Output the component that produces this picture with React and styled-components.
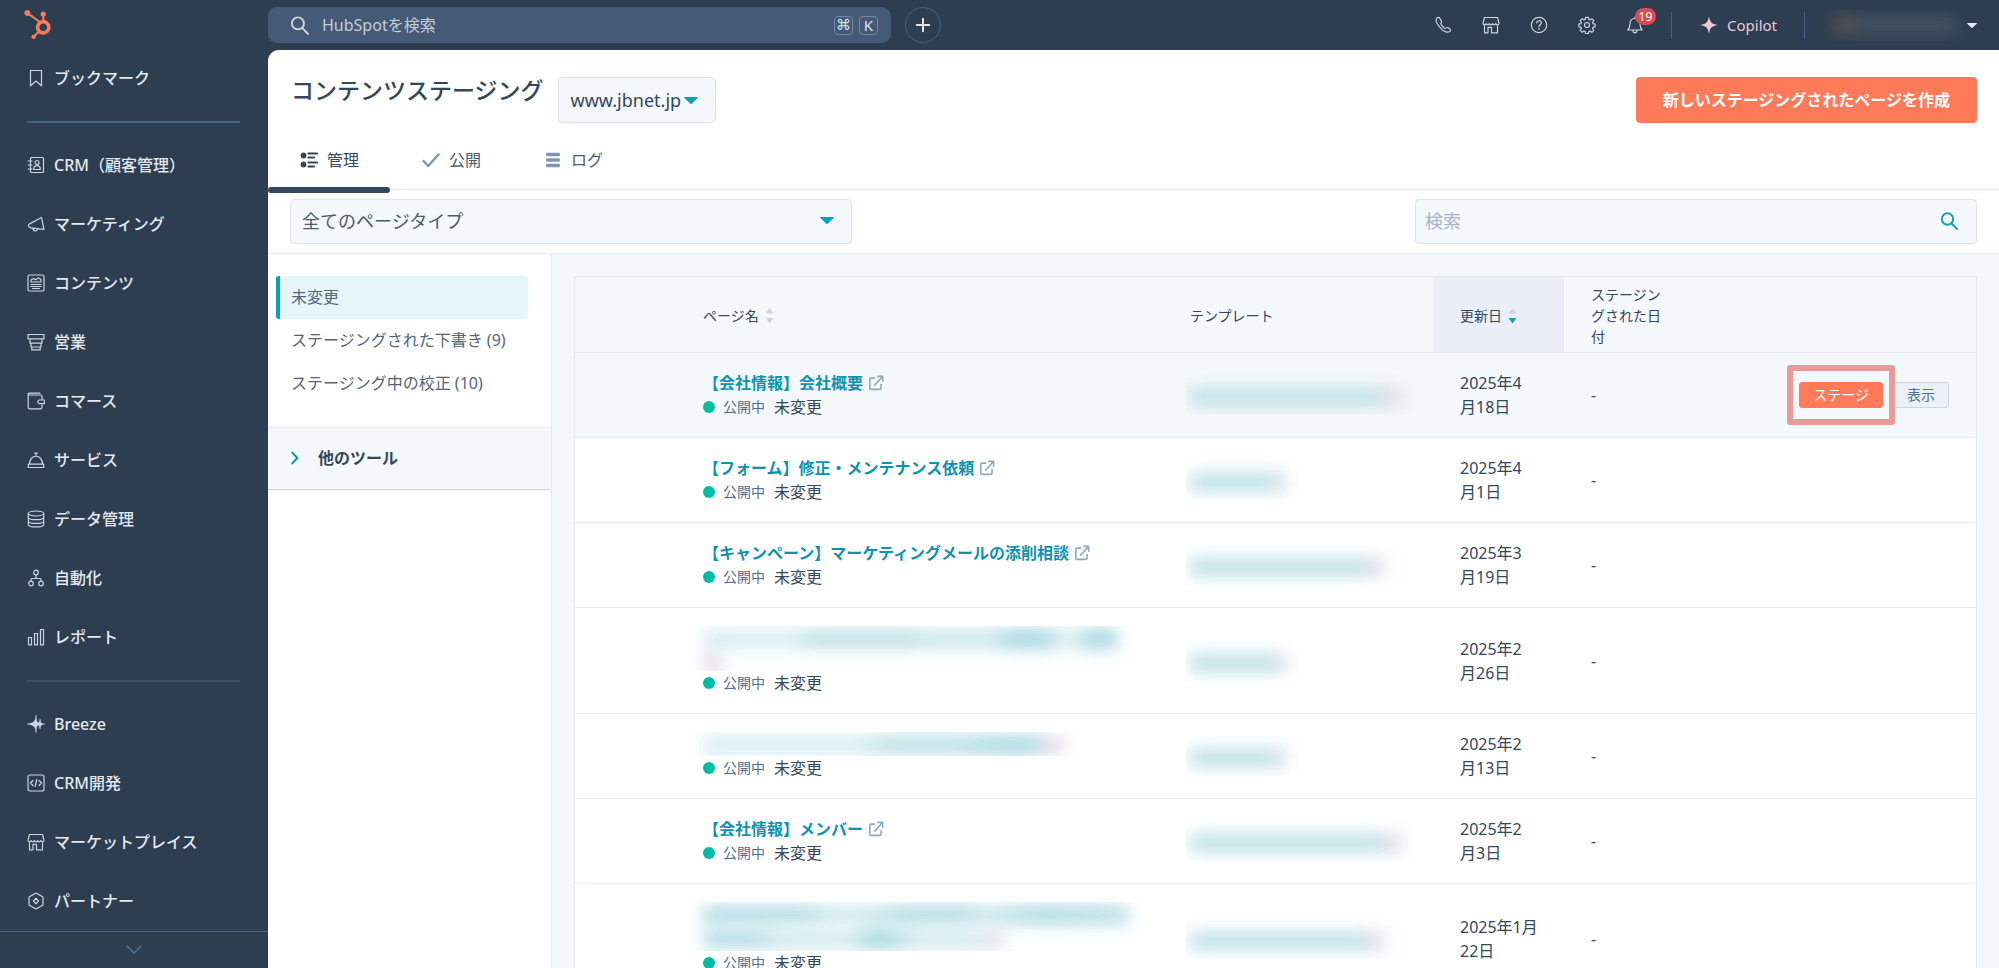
import { useState } from "react";
import styled, { createGlobalStyle } from "styled-components";
import { FaHubspot } from "react-icons/fa";

const GlobalStyle = createGlobalStyle`
  * { box-sizing: border-box; }
  body {
    margin: 0;
    background: #2d3e50;
    color: #33475b;
    font-family: "Noto Sans", "Noto Sans CJK JP", sans-serif;
    font-size: 16px;
    line-height: 24px;
  }
  button, input, select { font: inherit; color: inherit; }
  a { color: inherit; text-decoration: none; }
  svg { display: block; flex: none; }
`;

const Page = styled.div`
  display: flex;
  height: 100vh;
  overflow: hidden;
`;

/* ---------- sidebar ---------- */

const Sidebar = styled.aside`
  flex: none;
  width: 268px;
  display: flex;
  flex-direction: column;
  background: #2d3e50;
  color: #e4e9ef;
`;

const Logo = styled.a`
  flex: none;
  display: flex;
  align-items: center;
  height: 48px;
  padding-left: 23px;
  color: #ff7a59;
`;

const Nav = styled.nav`
  flex: 1;
  min-height: 0;
  overflow: hidden;
`;

const NavItem = styled.a`
  display: flex;
  align-items: center;
  gap: 9px;
  height: 59px;
  padding-left: 27px;
  font-weight: 500;
  svg { color: #cbd6e2; }
`;

const NavDivider = styled.hr`
  height: 2px;
  margin: 14px 28px 12px 27px;
  border: 0;
  background: ${(p) => (p.$soft ? "#3b5069" : "#456389")};
`;

const NavMore = styled.button`
  flex: none;
  display: flex;
  align-items: center;
  justify-content: center;
  height: 37px;
  border: 0;
  border-top: 1px solid #456080;
  background: #2d3e50;
  color: #4d6c92;
`;

/* ---------- top bar ---------- */

const Column = styled.div`
  flex: 1;
  min-width: 0;
  display: flex;
  flex-direction: column;
`;

const TopBar = styled.header`
  flex: none;
  display: flex;
  align-items: center;
  height: 50px;
  padding-right: 22px;
  color: #cbd6e2;
`;

const GlobalSearch = styled.label`
  display: flex;
  align-items: center;
  gap: 6px;
  flex: 0 1 623px;
  height: 36px;
  padding: 0 13px 0 22px;
  border-radius: 9px;
  background: #445a76;
  input {
    flex: 1;
    min-width: 0;
    padding: 0 0 0 7px;
    border: 0;
    outline: 0;
    background: none;
  }
  input::placeholder { color: #c3cedb; opacity: 1; }
`;

const Key = styled.kbd`
  display: flex;
  align-items: center;
  justify-content: center;
  width: 19px;
  height: 19px;
  border: 1px solid #7089a8;
  border-radius: 4px;
  color: #dbe3ec;
  font-family: ${(p) => (p.$symbol ? '"DejaVu Sans", sans-serif' : "inherit")};
  font-size: 15px;
  line-height: 17px;
`;

const AddButton = styled.button`
  display: flex;
  align-items: center;
  justify-content: center;
  width: 36px;
  height: 36px;
  margin-left: 14px;
  border: 1px solid #456080;
  border-radius: 50%;
  background: none;
  color: #e4e9ef;
`;

const Tools = styled.div`
  display: flex;
  align-items: center;
  gap: 30px;
  margin: 0 27px 0 auto;
`;

const ToolButton = styled.button`
  position: relative;
  padding: 0;
  border: 0;
  background: none;
`;

const Badge = styled.span`
  position: absolute;
  top: -8px;
  left: 9px;
  width: 21px;
  height: 17px;
  border-radius: 9px;
  background: #d94c53;
  color: #fff;
  font-size: 12px;
  line-height: 17px;
  text-align: center;
`;

const BarDivider = styled.span`
  width: 1px;
  height: 27px;
  background: #456080;
`;

const Copilot = styled.button`
  display: flex;
  align-items: center;
  gap: 9px;
  margin: 0 27px 0 28px;
  padding: 0;
  border: 0;
  background: none;
  color: #ecc9d8;
  font-size: 15px;
`;

const Account = styled.button`
  display: flex;
  align-items: center;
  margin-left: 17px;
  padding: 0;
  border: 0;
  background: none;
  color: #e4e9ef;
`;

const AccountName = styled.span`
  display: block;
  width: 145px;
  height: 31px;
  padding: 5px 10px;
  overflow: hidden;
  &::before {
    content: "";
    display: block;
    height: 21px;
    background: linear-gradient(90deg, #524e54 0 14%, #414f60 22%);
    filter: blur(7px);
  }
`;

/* ---------- content header ---------- */

const Content = styled.main`
  flex: 1;
  min-height: 0;
  display: flex;
  flex-direction: column;
  overflow: hidden;
  border-top-left-radius: 11px;
  background: #fff;
`;

const TitleRow = styled.div`
  display: flex;
  align-items: flex-start;
  gap: 14px;
  padding: 27px 22px 0 23px;
`;

const Title = styled.h1`
  margin: 0;
  font-size: 23px;
  font-weight: 500;
  line-height: 26px;
`;

const DomainButton = styled.button`
  display: flex;
  align-items: center;
  gap: 3px;
  width: 158px;
  height: 46px;
  padding: 0 12px;
  border: 1px solid #dbe3eb;
  border-radius: 4px;
  background: #f5f8fa;
  font-size: 18px;
`;

const PrimaryButton = styled.button`
  height: 46px;
  margin-left: auto;
  padding: 0 27px;
  border: 0;
  border-radius: 4px;
  background: #ff7a59;
  color: #fff;
  font-weight: 700;
`;

const Tabs = styled.nav`
  display: flex;
  height: 60px;
  margin-top: 7px;
  border-bottom: 1px solid #e5eaf0;
`;

const Tab = styled.a`
  position: relative;
  display: flex;
  align-items: center;
  gap: 9px;
  padding: 0 31px 0 32px;
  color: ${(p) => (p.$active ? "#33475b" : "#4a5b6e")};
  svg { color: ${(p) => (p.$active ? "#33475b" : "#7c98b6")}; }
  &::after {
    content: "";
    display: ${(p) => (p.$active ? "block" : "none")};
    position: absolute;
    left: 0;
    right: 0;
    bottom: -4px;
    height: 6px;
    border-radius: 3px;
    background: #33475b;
  }
`;

const Filters = styled.div`
  display: flex;
  justify-content: space-between;
  padding: 9px 22px;
  border-bottom: 1px solid #e5eaf0;
`;

const Field = styled.label`
  display: flex;
  align-items: center;
  width: 562px;
  height: 45px;
  padding: 0 ${(p) => p.$end}px 2px ${(p) => p.$start}px;
  border: 1px solid #dbe3eb;
  border-radius: 4px;
  background: #f5f8fa;
  font-size: 18px;
  color: ${(p) => p.$color};
  input, select {
    flex: 1;
    min-width: 0;
    padding: 0;
    border: 0;
    outline: 0;
    background: none;
    appearance: none;
    color: #4a5b6e;
  }
  input::placeholder { color: #a3b4ca; opacity: 1; }
`;

/* ---------- side panel ---------- */

const Body = styled.div`
  flex: 1;
  min-height: 0;
  display: flex;
`;

const Panel = styled.aside`
  flex: none;
  width: 284px;
  border-right: 1px solid #e5eaf0;
`;

const PanelList = styled.nav`
  padding: 22px 23px 22px 8px;
`;

const PanelItem = styled.a`
  display: block;
  padding-left: 11px;
  border-left: 4px solid ${(p) => (p.$active ? "#00a4bd" : "transparent")};
  border-radius: 3px;
  background: ${(p) => (p.$active ? "#e5f5f8" : "none")};
  color: #53657a;
  line-height: 43px;
`;

const MoreTools = styled.button`
  display: flex;
  align-items: center;
  gap: 16px;
  width: 100%;
  height: 63px;
  padding: 0 20px 2px;
  border: 0;
  border-top: 1px solid #e5eaf0;
  border-bottom: 1px solid #cbd6e2;
  background: #f5f8fa;
  font-weight: 600;
  svg { color: #0091ae; }
`;

/* ---------- table ---------- */

const TableArea = styled.section`
  flex: 1;
  min-width: 0;
  padding: 22px 22px 0;
  overflow: hidden;
  background: #f5f8fa;
`;

const Table = styled.table`
  width: 100%;
  table-layout: fixed;
  border: 1px solid #e5eaf0;
  border-spacing: 0;
  background: #fff;
`;

const Col = styled.col`
  width: ${(p) => p.$width}px;
`;

const Th = styled.th`
  padding: 7px 27px 5px;
  border-bottom: 1px solid #e5eaf0;
  background: ${(p) => (p.$sorted ? "#eaeef6" : "#f5f8fa")};
  font-size: 14px;
  font-weight: 400;
  line-height: 21px;
  text-align: left;
`;

const SortLabel = styled.span`
  display: flex;
  align-items: center;
  gap: 6px;
`;

const Tr = styled.tr`
  background: ${(p) => (p.$hovered ? "#f5f8fa" : "#fff")};
`;

const Td = styled.td`
  padding: 18px 18px 18px 27px;
  border-bottom: 1px solid #e5eaf0;
  white-space: pre-line;
`;

const PageLink = styled.a`
  display: flex;
  align-items: center;
  gap: 5px;
  color: #0e93ae;
  font-weight: 600;
  svg { color: #8fa6c4; }
`;

const Status = styled.div`
  display: flex;
  align-items: center;
`;

const Dot = styled.span`
  width: 12px;
  height: 12px;
  margin-right: 8px;
  border-radius: 50%;
  background: #00bda5;
`;

const Published = styled.span`
  margin-right: 9px;
  color: #516f90;
  font-size: 14px;
`;

const HiddenName = styled.div`
  height: ${(p) => p.$height}px;
  margin: 0 -12px;
  padding: 3px 12px;
  overflow: hidden;
`;

const Smudge = styled.span`
  display: block;
  width: ${(p) => p.$width}px;
  height: 20px;
  margin-bottom: 4px;
  background: ${(p) => p.$fill};
  filter: blur(8px);
`;

const HiddenTemplate = styled.div`
  height: 40px;
  margin: 0 -4px;
  padding: 12px 4px;
  overflow: hidden;
`;

const Actions = styled.div`
  display: flex;
  justify-content: flex-end;
  gap: 10px;
  padding-right: 9px;
`;

const Highlight = styled.div`
  position: relative;
  &::after {
    content: "";
    position: absolute;
    inset: -17px -12px;
    border: 6px solid #e99a9b;
    border-radius: 3px;
    pointer-events: none;
  }
`;

const SmallButton = styled.button`
  display: block;
  height: 26px;
  padding: 0 13px;
  border: 1px solid ${(p) => (p.$primary ? "#ff7a59" : "#cbd6e2")};
  border-radius: 3px;
  background: ${(p) => (p.$primary ? "#ff7a59" : "#eaf0f6")};
  color: ${(p) => (p.$primary ? "#fff" : "#506e91")};
  font-size: 14px;
  line-height: 22px;
`;

/* ---------- icons ---------- */

const shapes = {
  bookmark: <path d="M3.5 1.5h11v15.3L9 12l-5.500 4.800z" />,
  contacts: (
    <>
      <rect x="3.500" y="1.500" width="13" height="15" rx="1" />
      <circle cx="10" cy="6.500" r="2" />
      <path d="M6.800 13.500v-.8c0-1.800 1.400-3 3.200-3s3.200 1.200 3.200 3v.8zM1 5h4M1 9h4M1 13h4" />
    </>
  ),
  megaphone: <path d="M14.500 2.500 17 14.300 4 12.800C1 12.500.6 9.600 3 8.600zM6 13.200c0 3.600 4.700 3.600 4.500.4" />,
  content: (
    <>
      <rect x="1" y="1" width="16" height="16" rx="1.500" />
      <path d="M4 8V6l2.500-1.500 2 1.300L11.500 3.800 14 5.500V8zM4 10.500h10M4 12.500h10M5.500 14.500h7" />
    </>
  ),
  sales: <path d="M1 1.500h16v4.300H1zM3 5.800h12v4.400H3zM4 10.200h10V14H4zM4.800 14h8.400v2.800H4.800z" />,
  wallet: <path d="M15 7V4.500c0-1-.6-1.500-1.500-1.500H2.500C.6 3 .6 1.200 2.500 1.200H13M1.200 2.500v12.700c0 1 .6 1.600 1.500 1.600h10.800c1 0 1.500-.6 1.500-1.600V13M12.500 8h5v3.600h-5c-2.200 0-2.200-3.600 0-3.600z" />,
  cloche: <path d="M2.500 13.200C2.500 2.600 15.500 2.600 15.500 13.200M1.300 13.200h15.400v3.300H1.300zM7.800 2.200h2.400M9 2.200v2.500" />,
  database: (
    <>
      <ellipse cx="9" cy="3.500" rx="7.700" ry="2.500" />
      <path d="M1.300 3.500v11c0 3.300 15.400 3.300 15.400 0v-11M1.300 7.200c0 3.300 15.400 3.300 15.400 0M1.300 10.900c0 3.300 15.400 3.300 15.400 0" />
    </>
  ),
  automation: (
    <>
      <circle cx="9" cy="3.500" r="2.300" />
      <circle cx="4" cy="14.500" r="2.300" />
      <circle cx="14" cy="14.500" r="2.300" />
      <path d="M9 6v3.500M4 12v-1.500c0-.6.4-1 1-1h8c.6 0 1 .4 1 1V12" />
    </>
  ),
  reports: <path d="M1.500 9.500h3v7.300h-3zM7.500 5.500h3v11.300h-3zM13.500 1.500h3v15.300h-3z" />,
  breeze: (
    <path
      fill="currentColor"
      strokeWidth=".5"
      d="M9 .2c.3 4.500.6 6.200 1.700 7.300.9.800 1.300.2 1.700-.9.300-.8.500-1.500.7-2.400.5 3.700 1.200 4.400 4.600 4.800-3.400.4-4.100 1.100-4.600 4.800-.2-.9-.4-1.600-.7-2.400-.4-1.100-.8-1.700-1.700-.9-1.100 1.100-1.400 2.800-1.700 7.300C8.600 11.800 7.200 10 .3 9 7.200 8 8.600 6.200 9 .2z"
    />
  ),
  code: (
    <>
      <rect x="1" y="1" width="16" height="16" rx="2" />
      <path d="M6 6.500 3.500 9 6 11.500M12 6.500 14.500 9 12 11.500M9.800 5.500l-1.600 7" />
    </>
  ),
  store: <path d="M2.500 1.500h13L17 7.200c0 2-2.600 2-3.200.3-.7 1.700-2.600 1.700-3.200 0-.7 1.700-2.600 1.700-3.200 0-.7 1.700-2.600 1.700-3.200 0C3.600 9.200 1 9.200 1 7.200zM2.500 9v7.800H6v-5.500h3.500v5.500h6V9" />,
  partner: (
    <>
      <path d="M9 1l7 4v8l-7 4-7-4V5z" />
      <path d="M9 6.200 11.500 9 9 11.800 6.500 9z" />
    </>
  ),
  phone: <path d="M3.200 1.800c-2 1.500-1.200 5 2.300 9s7.300 6.200 9.800 5c1.600-.8 1.700-1.800.6-2.700l-1.700-1.300c-1-.8-1.600-.3-2.600.6-.8.5-5.300-4-4.700-5 .8-1 1-1.700.3-2.700L5.800 2.300c-.8-1.200-1.700-1.200-2.600-.5z" />,
  help: (
    <>
      <circle cx="9" cy="9" r="7.700" />
      <path d="M6.700 7c0-3 4.700-3 4.700-.2C11.400 8.500 9 8.600 9 10.700M9 12.300v1.300" />
    </>
  ),
  gear: (
    <>
      <circle cx="9" cy="9" r="2.500" />
      <path d="M7.600 1.300h2.800l.4 2.100 1.200.5 1.800-1.200 2 2-1.200 1.800.5 1.200 2 .4v2.800l-2 .4-.5 1.200 1.200 1.800-2 2-1.800-1.200-1.200.5-.4 2H7.600l-.4-2-1.200-.5-1.800 1.200-2-2 1.200-1.800-.5-1.200-2-.4V8.100l2-.4.5-1.200-1.200-1.800 2-2L6 3.900l1.200-.5z" />
    </>
  ),
  bell: <path d="M9 2.500c-3.500 0-5 2.500-5 5.500 0 3.500-.8 4.500-2.200 6h14.400c-1.400-1.500-2.200-2.500-2.200-6 0-3-1.500-5.500-5-5.500zM9 .8v1.700M7 14.200c0 3.300 4 3.300 4 0" />,
  sparkle: <path fill="currentColor" stroke="none" d="M9 .2c1.200 6.300 2.500 7.600 8.800 8.800C11.500 10.200 10.200 11.500 9 17.800 7.800 11.500 6.500 10.200.2 9 6.500 7.800 7.800 6.500 9 .2z" />,
  search: (
    <>
      <circle cx="7.500" cy="7" r="5.700" />
      <path d="m11.500 11.300 5.500 5.700" />
    </>
  ),
  plus: <path d="M9 2v14M2 9h14" />,
  manage: (
    <>
      <circle cx="3.500" cy="4.500" r="2.900" fill="currentColor" stroke="none" />
      <circle cx="3.500" cy="13.500" r="2.900" fill="currentColor" stroke="none" />
      <path d="M8.500 2.500h8.500M8.500 6.500h5.500M8.500 11.500h8.500M8.500 15.500h5.500" />
    </>
  ),
  check: <path d="m1.500 10 4.700 5L16.500 3.500" />,
  log: <path d="M3.500 3.500h11M3.500 9h11M3.500 14.500h11" />,
  right: <path d="M5.500 2 12 9l-6.500 7" />,
  down: <path d="m1.500 5 7.500 7.500L16.500 5" />,
  external: <path d="M7.500 3.500H3.700C2.500 3.500 2 4 2 5.200v9.300c0 1.200.5 1.700 1.700 1.700H13c1.200 0 1.700-.5 1.700-1.700v-3.700M11 1.500h5.500V7M16 2 7.500 11.500" />,
};

const Icon = ({ name, size = 18, weight = 1.2 }) => (
  <svg
    width={size}
    height={size}
    viewBox="0 0 18 18"
    fill="none"
    stroke="currentColor"
    strokeWidth={weight}
    strokeLinecap="round"
    strokeLinejoin="round"
    aria-hidden="true"
  >
    {shapes[name]}
  </svg>
);

const Caret = ({ width = 14, color = "#00a4bd" }) => (
  <svg width={width} height={width / 2} viewBox="0 0 14 7" fill={color} aria-hidden="true">
    <path d="M.8 0h12.400c.7 0 .9.600.4 1L7.700 6.700a1 1 0 0 1-1.400 0L.4 1C-.1.600.1 0 .8 0z" />
  </svg>
);

const SortArrows = ({ active }) => (
  <svg width="9" height="16" viewBox="0 0 9 16" aria-hidden="true">
    <path d="M4.500 0 8.500 5.500h-8z" fill="#cbd6e2" />
    <path d="M4.500 15.500.5 10h8z" fill={active ? "#00a4bd" : "#cbd6e2"} />
  </svg>
);

/* ---------- data ---------- */

const menu = [
  ["contacts", "CRM（顧客管理）"],
  ["megaphone", "マーケティング"],
  ["content", "コンテンツ"],
  ["sales", "営業"],
  ["wallet", "コマース"],
  ["cloche", "サービス"],
  ["database", "データ管理"],
  ["automation", "自動化"],
  ["reports", "レポート"],
];

const extras = [
  ["breeze", "Breeze"],
  ["code", "CRM開発"],
  ["store", "マーケットプレイス"],
  ["partner", "パートナー"],
];

const tabs = [
  ["manage", "管理", 2.2],
  ["check", "公開", 2.5],
  ["log", "ログ", 3.5],
];

const tail = "linear-gradient(90deg, #c2e3ea 0 88%, #e2dfe6 93%)";
const longName = "linear-gradient(90deg, #d9eff3 0 22%, #c2e3ea 26% 50%, #cfe9ee 55% 70%, #a9d8e2 74% 83%, #d9eff3 86% 90%, #a9d8e2 93%)";
const midName = "linear-gradient(90deg, #d9eff3 0 42%, #bfe2e9 52% 70%, #aedbe4 82% 91%, #e8e2ea 96%)";
const twoLine = "linear-gradient(90deg, #b9dfe7 0 24%, #d3ebf0 30% 38%, #b5dde5 48% 60%, #cfe9ee 66%, #b0dbe4 80%, #bfe2e9)";
const secondLine = "linear-gradient(90deg, #b9dfe7 0 18%, #d3ebf0 26% 50%, #a9d8e2 55% 62%, #d3ebf0 70% 88%, #e8e2ea)";
const stub = "#e2dfe6";

const pages = [
  { name: "【会社情報】会社概要", template: 212, date: "2025年4\n月18日", hovered: true },
  { name: "【フォーム】修正・メンテナンス依頼", template: 96, date: "2025年4\n月1日" },
  { name: "【キャンペーン】マーケティングメールの添削相談", template: 194, date: "2025年3\n月19日" },
  { hidden: [[414, longName], [20, stub]], height: 45, template: 96, date: "2025年2\n月26日" },
  { hidden: [[362, midName]], height: 24, template: 96, date: "2025年2\n月13日" },
  { name: "【会社情報】メンバー", template: 212, date: "2025年2\n月3日" },
  { hidden: [[426, twoLine], [300, secondLine]], height: 49, template: 194, date: "2025年1月\n22日" },
];

const PageRow = ({ page }) => (
  <Tr $hovered={page.hovered}>
    <Td />
    <Td>
      {page.name ? (
        <PageLink href="#">
          {page.name}
          <Icon name="external" size={16} weight={1.8} />
        </PageLink>
      ) : (
        <HiddenName $height={page.height}>
          {page.hidden.map(([width, fill]) => (
            <Smudge key={width} $width={width} $fill={fill} />
          ))}
        </HiddenName>
      )}
      <Status>
        <Dot />
        <Published>公開中</Published>
        未変更
      </Status>
    </Td>
    <Td>
      <HiddenTemplate>
        <Smudge $width={page.template} $fill={tail} />
      </HiddenTemplate>
    </Td>
    <Td>{page.date}</Td>
    <Td>-</Td>
    <Td>
      {page.hovered && (
        <Actions>
          <Highlight>
            <SmallButton $primary>ステージ</SmallButton>
          </Highlight>
          <SmallButton>表示</SmallButton>
        </Actions>
      )}
    </Td>
  </Tr>
);

const App = () => {
  const [type, setType] = useState("all");

  return (
    <Page>
      <GlobalStyle />

      <Sidebar>
        <Logo href="#" aria-label="HubSpot">
          <FaHubspot size={29} />
        </Logo>
        <Nav>
          <NavItem href="#">
            <Icon name="bookmark" />
            ブックマーク
          </NavItem>
          <NavDivider />
          {menu.map(([icon, label]) => (
            <NavItem key={label} href="#">
              <Icon name={icon} />
              {label}
            </NavItem>
          ))}
          <NavDivider $soft />
          {extras.map(([icon, label]) => (
            <NavItem key={label} href="#">
              <Icon name={icon} />
              {label}
            </NavItem>
          ))}
        </Nav>
        <NavMore aria-label="さらに表示">
          <Icon name="down" size={16} weight={2} />
        </NavMore>
      </Sidebar>

      <Column>
        <TopBar>
          <GlobalSearch>
            <Icon name="search" size={19} weight={1.8} />
            <input type="text" placeholder="HubSpotを検索" aria-label="HubSpotを検索" />
            <Key $symbol>⌘</Key>
            <Key>K</Key>
          </GlobalSearch>
          <AddButton aria-label="作成">
            <Icon name="plus" size={16} weight={2.2} />
          </AddButton>
          <Tools>
            <ToolButton aria-label="電話"><Icon name="phone" /></ToolButton>
            <ToolButton aria-label="マーケットプレイス"><Icon name="store" /></ToolButton>
            <ToolButton aria-label="ヘルプ"><Icon name="help" /></ToolButton>
            <ToolButton aria-label="設定"><Icon name="gear" /></ToolButton>
            <ToolButton aria-label="通知">
              <Icon name="bell" />
              <Badge>19</Badge>
            </ToolButton>
          </Tools>
          <BarDivider />
          <Copilot>
            <Icon name="sparkle" />
            Copilot
          </Copilot>
          <BarDivider />
          <Account aria-label="アカウント">
            <AccountName />
            <Caret width={10} color="#e4e9ef" />
          </Account>
        </TopBar>

        <Content>
          <TitleRow>
            <Title>コンテンツステージング</Title>
            <DomainButton>
              www.jbnet.jp
              <Caret />
            </DomainButton>
            <PrimaryButton>新しいステージングされたページを作成</PrimaryButton>
          </TitleRow>

          <Tabs>
            {tabs.map(([icon, label, weight], i) => (
              <Tab key={label} href="#" $active={i === 0}>
                <Icon name={icon} weight={weight} />
                {label}
              </Tab>
            ))}
          </Tabs>

          <Filters>
            <Field $start={11} $end={17} $color="#00a4bd">
              <select aria-label="ページタイプ" value={type} onChange={(e) => setType(e.target.value)}>
                <option value="all">全てのページタイプ</option>
              </select>
              <Caret />
            </Field>
            <Field $start={9} $end={18} $color="#1a9fb8">
              <input type="text" placeholder="検索" aria-label="検索" />
              <Icon name="search" weight={2} />
            </Field>
          </Filters>

          <Body>
            <Panel>
              <PanelList>
                <PanelItem href="#" $active>未変更</PanelItem>
                <PanelItem href="#">ステージングされた下書き (9)</PanelItem>
                <PanelItem href="#">ステージング中の校正 (10)</PanelItem>
              </PanelList>
              <MoreTools>
                <Icon name="right" size={14} weight={2.4} />
                他のツール
              </MoreTools>
            </Panel>

            <TableArea>
              <Table>
                <colgroup>
                  <Col $width={101} />
                  <col />
                  <Col $width={270} />
                  <Col $width={131} />
                  <Col $width={127} />
                  <Col $width={285} />
                </colgroup>
                <thead>
                  <tr>
                    <Th />
                    <Th><SortLabel>ページ名<SortArrows /></SortLabel></Th>
                    <Th>テンプレート</Th>
                    <Th $sorted><SortLabel>更新日<SortArrows active /></SortLabel></Th>
                    <Th>ステージングされた日付</Th>
                    <Th />
                  </tr>
                </thead>
                <tbody>
                  {pages.map((page) => (
                    <PageRow key={page.date} page={page} />
                  ))}
                </tbody>
              </Table>
            </TableArea>
          </Body>
        </Content>
      </Column>
    </Page>
  );
};

export default App;
